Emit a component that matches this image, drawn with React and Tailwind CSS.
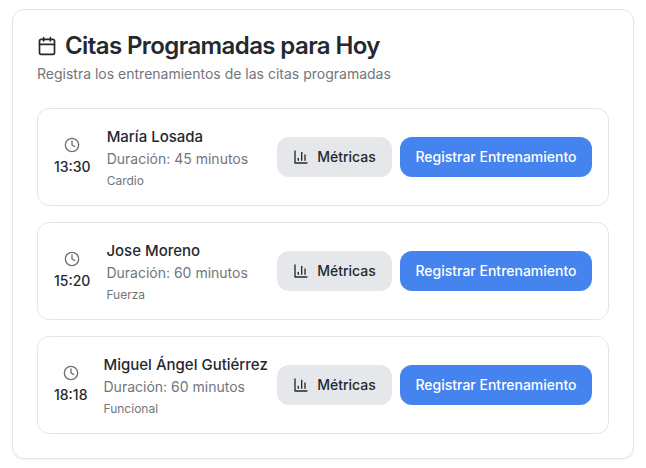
import { Calendar, Clock } from 'lucide-react';

const appointments = [
  { id: 1, time: '13:30', client: 'María Losada', duration: 45, type: 'Cardio' },
  { id: 2, time: '15:20', client: 'Jose Moreno', duration: 60, type: 'Fuerza' },
  { id: 3, time: '18:18', client: 'Miguel Ángel Gutiérrez', duration: 60, type: 'Funcional' }
];

function MetricsIcon() {
  return (
    <svg
      className="w-4 h-4 shrink-0"
      viewBox="0 0 24 24"
      fill="none"
      stroke="currentColor"
      strokeWidth="2"
      strokeLinecap="round"
      strokeLinejoin="round"
      aria-hidden="true"
    >
      <path d="M3 3v18h18" />
      <path d="M8 17v-3" />
      <path d="M13 17V5" />
      <path d="M18 17V9" />
    </svg>
  );
}

function AppointmentCard({ appointment }) {
  return (
    <li className="flex items-center justify-between rounded-xl border border-[#e4e5e8] p-4">
      <div className="flex items-center gap-4 whitespace-nowrap">
        <div className="flex flex-col items-center gap-1">
          <Clock className="w-4 h-4 text-[#6b7078]" />
          <span className="text-sm font-medium">{appointment.time}</span>
        </div>
        <div>
          <h2 className="text-[15px] leading-6 font-medium">{appointment.client}</h2>
          <p className="text-sm text-[#71767c]">Duración: {appointment.duration} minutos</p>
          <p className="mt-1 text-xs text-[#71767c]">{appointment.type}</p>
        </div>
      </div>
      <div className="flex shrink-0 gap-2">
        <button
          type="button"
          className="flex h-10 w-[115px] items-center justify-center gap-2 rounded-xl bg-[#e5e7eb] text-sm font-medium hover:bg-gray-300"
        >
          <MetricsIcon />
          Métricas
        </button>
        <button
          type="button"
          className="h-10 w-48 rounded-xl bg-[#4584ee] text-sm font-medium text-white hover:bg-blue-600"
        >
          Registrar Entrenamiento
        </button>
      </div>
    </li>
  );
}

export default function App() {
  return (
    <main className="min-h-screen bg-white px-3 py-[9px] font-['Inter',sans-serif] text-[#24292f]">
      <section className="rounded-xl border border-[#e4e5e8] bg-white p-6 shadow-xs">
        {/* Header */}
        <header className="mb-6">
          <h1 className="flex items-center gap-2 text-2xl leading-6 font-semibold tracking-tight">
            <Calendar className="w-5 h-5 shrink-0" />
            Citas Programadas para Hoy
          </h1>
          <p className="mt-1.5 text-sm text-[#71767c]">
            Registra los entrenamientos de las citas programadas
          </p>
        </header>

        {/* Appointments */}
        <ul className="space-y-4">
          {appointments.map((appointment) => (
            <AppointmentCard key={appointment.id} appointment={appointment} />
          ))}
        </ul>
      </section>
    </main>
  );
}
